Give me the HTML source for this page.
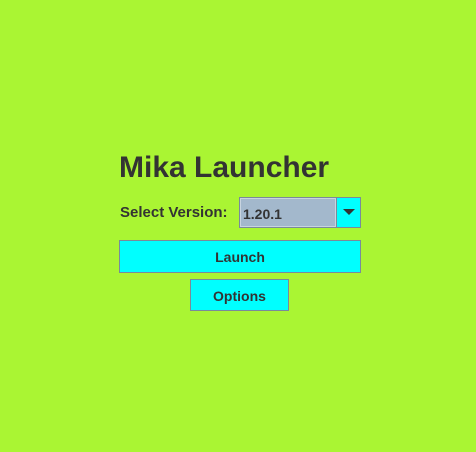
<!DOCTYPE html>
<html><head><style>
html,body{margin:0;padding:0;width:476px;height:452px;overflow:hidden;background:#aaf533;font-family:"Liberation Sans",sans-serif;color:#333;}
.a{position:absolute;box-sizing:border-box;}
.t{left:119px;top:150px;font-size:30px;font-weight:bold;color:#333;line-height:36px;}
.l{left:120px;top:204px;font-size:15px;font-weight:bold;line-height:18px;}
.cb{left:239px;top:197px;width:98px;height:31px;background:#a3b8cc;border:1px solid #7a8a9a;box-shadow:inset 0 0 0 1px #c8d4e0;font-size:14px;font-weight:bold;padding:8px 0 0 3px;line-height:16px;}
.ar{left:336px;top:197px;width:25px;height:31px;background:#00ffff;border:1px solid #7a8a9a;}
.ar:after{content:"";position:absolute;left:6px;top:11px;border-left:6px solid transparent;border-right:6px solid transparent;border-top:6px solid #333;}
.btn{background:#00ffff;border:1px solid #7a8a9a;font-size:14px;font-weight:bold;text-align:center;}
.b1{left:119px;top:240px;width:242px;height:33px;line-height:33px;}
.b2{left:190px;top:279px;width:99px;height:32px;line-height:33px;}
</style></head><body>
<div class="a t">Mika Launcher</div>
<div class="a l">Select Version:</div>
<div class="a cb">1.20.1</div>
<div class="a ar"></div>
<div class="a btn b1">Launch</div>
<div class="a btn b2">Options</div>
</body></html>
